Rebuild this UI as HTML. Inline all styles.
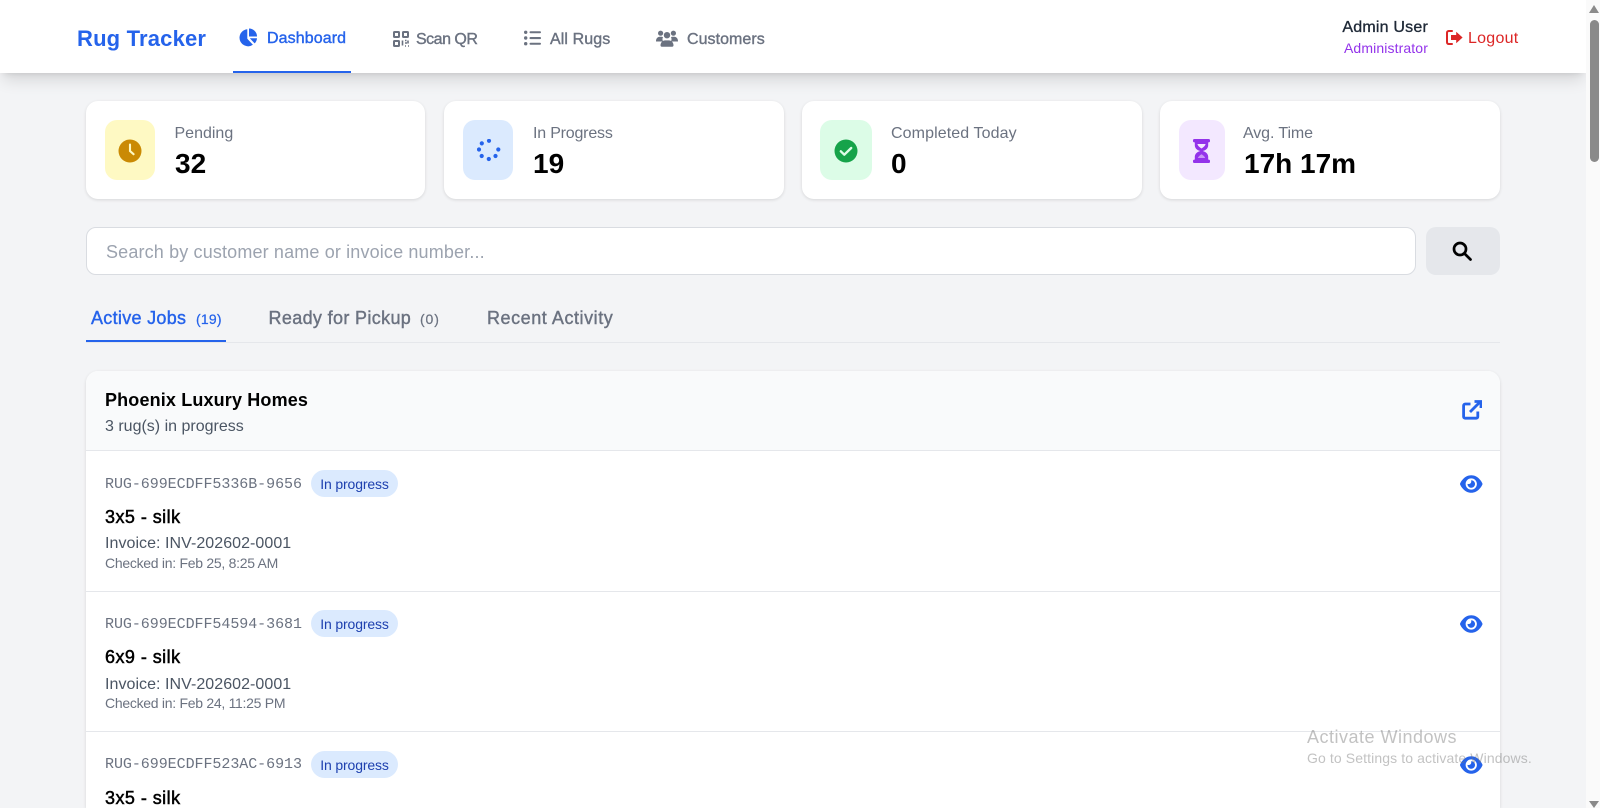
<!DOCTYPE html>
<html lang="en">
<head>
<meta charset="utf-8">
<title>Rug Tracker</title>
<style>
html,body{margin:0;padding:0;width:1600px;height:808px;overflow:hidden;background:#f3f4f6;font-family:"Liberation Sans",sans-serif}
#root{position:relative;width:1600px;height:808px;overflow:hidden;background:#f3f4f6}
.a{position:absolute}
.t{position:absolute;white-space:nowrap;line-height:20px}
svg{position:absolute;display:block}
.m{-webkit-text-stroke:.4px currentColor}
.card{position:absolute;top:101px;height:98px;background:#fff;border-radius:12px;box-shadow:0 1px 3px rgba(0,0,0,.12)}
.ic{position:absolute;top:120px;height:60px;border-radius:12px}
.lab{font-size:16px;color:#6b7280;top:124px}
.val{font-size:28px;font-weight:700;color:#000;top:154px;line-height:20px}
.id{font-family:"Liberation Mono",monospace;font-size:15px;letter-spacing:-.05px;color:#6b7280;left:105px}
.badge{position:absolute;left:311px;width:87px;height:27px;border-radius:14px;background:#dbeafe;color:#1e40af;font-size:14px;line-height:28px;text-align:center;letter-spacing:-.15px}
.ti{font-size:18px;color:#000;left:105px;letter-spacing:.45px;-webkit-text-stroke:.5px #000}
.inv{font-size:16px;color:#4b5563;left:105px;letter-spacing:.05px}
.chk{font-size:14px;color:#6b7280;left:105px;letter-spacing:-.28px}
.div{position:absolute;left:86px;width:1414px;height:1px;background:#e5e7eb}
</style>
</head>
<body>
<div id="root">

<!-- panel -->
<div class="a" style="left:86px;top:371px;width:1414px;height:437px;background:#fff;border-radius:12px 12px 0 0;box-shadow:0 1px 3px rgba(0,0,0,.12)"></div>
<div class="a" style="left:86px;top:371px;width:1414px;height:79px;background:#f9fafb;border-radius:12px 12px 0 0"></div>
<div class="div" style="top:450px"></div>
<div class="div" style="top:591px"></div>
<div class="div" style="top:731px"></div>

<!-- nav -->
<div class="a" style="left:0;top:0;width:1586px;height:73px;background:#fff;box-shadow:0 10px 15px -3px rgba(0,0,0,.12),0 4px 6px -4px rgba(0,0,0,.12)"></div>
<div class="a" style="left:233px;top:71px;width:118px;height:2px;background:#2563eb"></div>
<div class="t" style="left:77px;top:29px;font-size:22px;font-weight:700;color:#2563eb;letter-spacing:.18px">Rug Tracker</div>

<svg style="left:239px;top:28px" width="19" height="19" viewBox="0 0 19 19" fill="#2563eb"><path d="M8.3 1.2v9.6l5.6 6A8.6 8.6 0 0 1 .5 9.8 8.6 8.6 0 0 1 8.3 1.2z"/><path d="M10 .5a8 8 0 0 1 8 8h-8z"/><path d="M10.8 10.2h7.2a8 8 0 0 1-2.4 5.2z"/></svg>
<div class="t m" style="left:267px;top:29px;font-size:16px;color:#2563eb;letter-spacing:.1px">Dashboard</div>

<svg style="left:393px;top:31px" width="16" height="16" viewBox="0 0 16 16" fill="none" stroke="#6b7280" stroke-width="2"><rect x="1" y="1" width="5" height="5" rx=".6"/><rect x="10" y="1" width="5" height="5" rx=".6"/><rect x="1" y="10" width="5" height="5" rx=".6"/><path d="M9.5 9.5v5M12 9.5h1.5M15 9.5v3M12 12h2" stroke-width="1.6"/><path d="M12 15h1M15 15h1" stroke-width="1.4"/></svg>
<div class="t m" style="left:416px;top:30px;font-size:16px;color:#6b7280;letter-spacing:-.5px">Scan QR</div>

<svg style="left:524px;top:30px" width="17" height="16" viewBox="0 0 17 16" fill="#6b7280"><circle cx="1.7" cy="2.3" r="1.7"/><circle cx="1.7" cy="8" r="1.7"/><circle cx="1.7" cy="13.7" r="1.7"/><rect x="5.5" y="1.2" width="11.5" height="2.1" rx="1"/><rect x="5.5" y="7" width="11.5" height="2.1" rx="1"/><rect x="5.5" y="12.7" width="11.5" height="2.1" rx="1"/></svg>
<div class="t m" style="left:550px;top:30px;font-size:16px;color:#6b7280;letter-spacing:.1px">All Rugs</div>

<svg style="left:656px;top:30px" width="22" height="17" viewBox="0 0 22 17" fill="#6b7280"><circle cx="4.6" cy="3.2" r="2.6"/><circle cx="17.4" cy="3.2" r="2.6"/><circle cx="11" cy="5.2" r="3.2"/><path d="M0 11.2C0 8.6 1.6 6.8 3.6 6.8h2c.5 0 1 .1 1.4.3-.7 1.2-.7 3 .1 4.4H.4c-.2 0-.4-.1-.4-.3z"/><path d="M22 11.2c0-2.6-1.6-4.4-3.6-4.4h-2c-.5 0-1 .1-1.4.3.7 1.2.7 3-.1 4.4h6.7c.2 0 .4-.1.4-.3z"/><path d="M4.5 15.4c0-3 2.2-5 4.6-5h3.8c2.4 0 4.6 2 4.6 5 0 .8-.6 1.4-1.3 1.4H5.8c-.7 0-1.3-.6-1.3-1.4z"/></svg>
<div class="t m" style="left:687px;top:30px;font-size:16px;color:#6b7280;letter-spacing:.05px">Customers</div>

<div class="t m" style="right:172px;top:18px;font-size:16px;color:#1f2937;-webkit-text-stroke:.35px #1f2937;letter-spacing:.2px">Admin User</div>
<div class="t" style="right:172px;top:38px;font-size:14px;color:#9333ea;letter-spacing:.12px">Administrator</div>
<svg style="left:1446px;top:30px" width="17" height="15" viewBox="0 0 17 15" fill="#dc2626"><path d="M6 1H2.700A1.700 1.700 0 0 0 1 2.700v9.600A1.700 1.700 0 0 0 2.700 14H6" fill="none" stroke="#dc2626" stroke-width="2" stroke-linecap="round"/><path d="M10.200 1.800 16.600 7.500l-6.400 5.700V10H5V5h5.200z"/></svg>
<div class="t" style="left:1468px;top:29px;font-size:16px;color:#dc2626;letter-spacing:.25px">Logout</div>

<!-- stat cards -->
<div class="card" style="left:86px;width:339px"></div>
<div class="card" style="left:444px;width:340px"></div>
<div class="card" style="left:802px;width:340px"></div>
<div class="card" style="left:1160px;width:340px"></div>

<div class="ic" style="left:105px;width:50px;background:#fef9c3"></div>
<svg style="left:118px;top:139px" width="24" height="24" viewBox="0 0 24 24"><circle cx="12" cy="12" r="11.500" fill="#ca8a04"/><path d="M12 5.500V12l3.600 3.200" fill="none" stroke="#fef9c3" stroke-width="2.100" stroke-linecap="round"/></svg>
<div class="t lab" style="left:174.500px">Pending</div>
<div class="t val" style="left:175px">32</div>

<div class="ic" style="left:463px;width:50px;background:#dbeafe"></div>
<svg style="left:477px;top:139px" width="24" height="24" viewBox="0 0 24 24" fill="#2563eb"><circle cx="12" cy="1.800" r="2.100"/><circle cx="4.800" cy="4.400" r="2.100"/><circle cx="2" cy="10.500" r="2.100"/><circle cx="4.700" cy="17" r="2.100"/><circle cx="11.800" cy="20" r="2.100"/><circle cx="18.500" cy="17" r="2.100"/><circle cx="21.300" cy="10.500" r="2.100"/></svg>
<div class="t lab" style="left:533px;letter-spacing:-.2px">In Progress</div>
<div class="t val" style="left:533px">19</div>

<div class="ic" style="left:820px;width:52px;background:#dcfce7"></div>
<svg style="left:834px;top:139px" width="24" height="24" viewBox="0 0 24 24"><circle cx="12" cy="12" r="11.500" fill="#16a34a"/><path d="M6.800 12.300l3.500 3.400 6.900-6.700" fill="none" stroke="#dcfce7" stroke-width="2.400" stroke-linecap="round" stroke-linejoin="round"/></svg>
<div class="t lab" style="left:891px;letter-spacing:.1px">Completed Today</div>
<div class="t val" style="left:891px">0</div>

<div class="ic" style="left:1179px;width:46px;background:#f3e8ff"></div>
<svg style="left:1192px;top:139px" width="20" height="24" viewBox="0 0 20 24" fill="#9333ea"><rect x="1" y="0" width="17" height="3.400" rx="1.400"/><rect x="1" y="20.600" width="17" height="3.400" rx="1.400"/><path d="M2.800 3h13.400v3.200c0 2-1.200 3.900-3.200 5L10.800 12l2.200.9c2 1.100 3.200 3 3.200 5V21H2.800v-3.100c0-2 1.200-3.900 3.200-5L8.200 12 6 11.200c-2-1.100-3.200-3-3.200-5z"/><path d="M5.500 5h8c0 1.500-2 3.200-4 4.500-2-1.300-4-3-4-4.500z" fill="#f3e8ff"/><path d="M5.800 19c.6-1.700 2.200-3 3.700-3.800 1.500.8 3.100 2.100 3.700 3.800z" fill="#f3e8ff" opacity=".55"/></svg>
<div class="t lab" style="left:1243px;letter-spacing:-.1px">Avg. Time</div>
<div class="t val" style="left:1244px">17h 17m</div>

<!-- search -->
<div class="a" style="left:86px;top:227px;width:1328px;height:46px;background:#fff;border:1.500px solid #d9dce1;border-radius:10px"></div>
<div class="t" style="left:106px;top:242px;font-size:18px;color:#9ca3af;letter-spacing:.15px">Search by customer name or invoice number...</div>
<div class="a" style="left:1426px;top:227px;width:74px;height:48px;background:#e5e7eb;border-radius:10px"></div>
<svg style="left:1452px;top:241px" width="20" height="20" viewBox="0 0 20 20" fill="none" stroke="#000" stroke-width="2.700"><circle cx="8" cy="8" r="6"/><path d="M12.500 12.500 18.500 18.500" stroke-linecap="round"/></svg>

<!-- tabs -->
<div class="a" style="left:86px;top:342px;width:1414px;height:1px;background:#e5e7eb"></div>
<div class="a" style="left:86px;top:340px;width:140px;height:2px;background:#2563eb"></div>
<div class="t m" style="left:91px;top:308px;font-size:18px;color:#2563eb;letter-spacing:.3px">Active Jobs</div>
<div class="t m" style="left:196px;top:309px;font-size:14px;color:#2563eb;-webkit-text-stroke:.2px #2563eb;letter-spacing:.2px">(19)</div>
<div class="t m" style="left:268.500px;top:308px;font-size:18px;color:#6b7280;letter-spacing:.35px">Ready for Pickup</div>
<div class="t m" style="left:420px;top:309px;font-size:14px;color:#6b7280;-webkit-text-stroke:.2px #6b7280;letter-spacing:.9px">(0)</div>
<div class="t m" style="left:487px;top:308px;font-size:18px;color:#6b7280;letter-spacing:.55px">Recent Activity</div>

<!-- panel header -->
<div class="t" style="left:105px;top:390px;font-size:18px;font-weight:700;color:#000;letter-spacing:.15px">Phoenix Luxury Homes</div>
<div class="t" style="left:105px;top:417px;font-size:16px;color:#4b5563;letter-spacing:0">3 rug(s) in progress</div>
<svg style="left:1462px;top:400px" width="20" height="20" viewBox="0 0 20 20" fill="none" stroke="#2563eb" stroke-width="2.800"><path d="M8.500 4H3.200A1.600 1.600 0 0 0 1.600 5.600v11a1.600 1.600 0 0 0 1.600 1.600h11a1.600 1.600 0 0 0 1.600-1.600V11.500"/><path d="M8 12 17.500 2.500"/><path d="M12.500 1.500h6.500v6.500"/></svg>

<!-- row 1 -->
<div class="t id" style="top:475px">RUG-699ECDFF5336B-9656</div>
<div class="badge" style="top:470px">In progress</div>
<div class="t ti" style="top:507px">3x5 - silk</div>
<div class="t inv" style="top:534px">Invoice: INV-202602-0001</div>
<div class="t chk" style="top:553px">Checked in: Feb 25, 8:25 AM</div>
<svg style="left:1460px;top:474px" width="22.500" height="20" viewBox="0 0 576 512" fill="#2563eb"><path d="M288 32c-80.800 0-145.500 36.800-192.600 80.600C48.600 156 17.300 208 2.500 243.700c-3.300 7.900-3.300 16.700 0 24.600C17.300 304 48.600 356 95.400 399.400C142.500 443.200 207.200 480 288 480s145.500-36.800 192.600-80.600c46.800-43.500 78.100-95.400 93-131.100c3.300-7.900 3.300-16.700 0-24.600c-14.900-35.700-46.200-87.700-93-131.100C433.500 68.800 368.800 32 288 32zM144 256a144 144 0 1 1 288 0 144 144 0 1 1-288 0zm144-64c0 35.300-28.700 64-64 64c-7.100 0-13.900-1.200-20.300-3.300c-5.500-1.800-11.900 1.600-11.700 7.400c.3 6.900 1.300 13.800 3.200 20.700c13.700 51.200 66.400 81.600 117.600 67.900s81.600-66.400 67.900-117.600c-11.100-41.500-47.800-69.400-88.600-71.100c-5.800-.2-9.200 6.100-7.400 11.700c2.100 6.400 3.300 13.200 3.300 20.300z"/></svg>

<!-- row 2 -->
<div class="t id" style="top:615px">RUG-699ECDFF54594-3681</div>
<div class="badge" style="top:610px">In progress</div>
<div class="t ti" style="top:647px">6x9 - silk</div>
<div class="t inv" style="top:675px">Invoice: INV-202602-0001</div>
<div class="t chk" style="top:693px">Checked in: Feb 24, 11:25 PM</div>
<svg style="left:1460px;top:614px" width="22.500" height="20" viewBox="0 0 576 512" fill="#2563eb"><path d="M288 32c-80.800 0-145.500 36.800-192.600 80.600C48.600 156 17.300 208 2.500 243.700c-3.300 7.900-3.300 16.700 0 24.600C17.300 304 48.600 356 95.400 399.400C142.500 443.200 207.200 480 288 480s145.500-36.800 192.600-80.600c46.800-43.500 78.100-95.400 93-131.100c3.300-7.900 3.300-16.700 0-24.600c-14.900-35.700-46.200-87.700-93-131.100C433.500 68.800 368.800 32 288 32zM144 256a144 144 0 1 1 288 0 144 144 0 1 1-288 0zm144-64c0 35.300-28.700 64-64 64c-7.100 0-13.900-1.200-20.300-3.300c-5.500-1.800-11.900 1.600-11.700 7.400c.3 6.900 1.300 13.800 3.200 20.700c13.700 51.200 66.400 81.600 117.600 67.900s81.600-66.400 67.900-117.600c-11.100-41.500-47.800-69.400-88.600-71.100c-5.800-.2-9.200 6.100-7.400 11.700c2.100 6.400 3.300 13.200 3.300 20.300z"/></svg>

<!-- row 3 -->
<div class="t id" style="top:755px">RUG-699ECDFF523AC-6913</div>
<div class="badge" style="top:751px">In progress</div>
<div class="t ti" style="top:788px">3x5 - silk</div>
<svg style="left:1460px;top:755px" width="22.500" height="20" viewBox="0 0 576 512" fill="#2563eb"><path d="M288 32c-80.800 0-145.500 36.800-192.600 80.600C48.600 156 17.300 208 2.500 243.700c-3.300 7.900-3.300 16.700 0 24.600C17.300 304 48.600 356 95.400 399.400C142.500 443.200 207.200 480 288 480s145.500-36.800 192.600-80.600c46.800-43.500 78.100-95.400 93-131.100c3.300-7.900 3.300-16.700 0-24.600c-14.900-35.700-46.200-87.700-93-131.100C433.500 68.800 368.800 32 288 32zM144 256a144 144 0 1 1 288 0 144 144 0 1 1-288 0zm144-64c0 35.300-28.700 64-64 64c-7.100 0-13.900-1.200-20.300-3.300c-5.500-1.800-11.900 1.600-11.700 7.400c.3 6.900 1.300 13.800 3.200 20.700c13.700 51.200 66.400 81.600 117.600 67.900s81.600-66.400 67.900-117.600c-11.100-41.500-47.800-69.400-88.600-71.100c-5.800-.2-9.200 6.100-7.400 11.700c2.100 6.400 3.300 13.200 3.300 20.300z"/></svg>

<!-- scrollbar -->
<div class="a" style="left:1586px;top:0;width:14px;height:808px;background:#fafafa"></div>
<svg style="left:1589px;top:5px" width="10" height="8" viewBox="0 0 10 8" fill="#8a8a8a"><path d="M5 0 10 8H0z"/></svg>
<div class="a" style="left:1590px;top:20px;width:9px;height:142px;background:#8a8a8a;border-radius:5px"></div>
<svg style="left:1589px;top:801px" width="10" height="7" viewBox="0 0 10 7" fill="#8a8a8a"><path d="M0 0h10L5 7z"/></svg>

<!-- watermark -->
<div class="t" style="left:1307px;top:727px;font-size:18px;color:rgba(120,120,120,.45);letter-spacing:.5px">Activate Windows</div>
<div class="t" style="left:1307px;top:748px;font-size:14px;color:rgba(120,120,120,.45);letter-spacing:.11px">Go to Settings to activate Windows.</div>

</div>
</body>
</html>
